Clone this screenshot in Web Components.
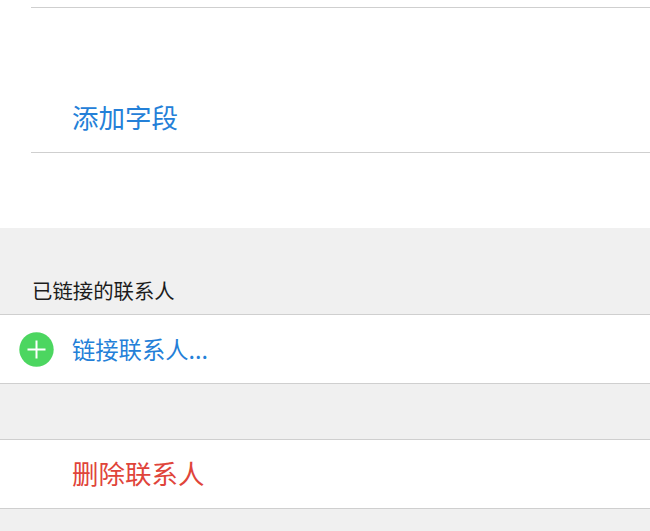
<!DOCTYPE html>
<html lang="zh">
<head>
<meta charset="utf-8">
<style>
  html, body { margin: 0; padding: 0; }
  body {
    width: 650px;
    height: 531px;
    overflow: hidden;
    background: #f0f0f0;
    font-family: "Noto Sans CJK SC", "Liberation Sans", sans-serif;
  }
</style>
</head>
<body>
<contact-page></contact-page>

<script>
// Plain row with a 72px text column, used for every tappable line
class ContactRow extends HTMLElement {
    constructor() {
        super();
        this.attachShadow({ mode: 'open' });
    }

    connectedCallback() {
        this.shadowRoot.innerHTML = `
            <style>
                :host {
                    display: flex;
                    align-items: center;
                    box-sizing: border-box;
                    height: 70px;
                    background: #fff;
                    border-top: 1px solid #cfcfcf;
                    border-bottom: 1px solid #cfcfcf;
                    color: #2480d8;
                    font-size: 23.3px;
                    font-weight: 400;
                }
                :host([danger]) {
                    color: #e0443a;
                    font-size: 26.5px;
                    padding-bottom: 4px;
                }
                .icon {
                    flex: 0 0 72px;
                    display: flex;
                    justify-content: flex-start;
                    padding-left: 19px;
                    box-sizing: border-box;
                }
            </style>
            <div class="icon"><slot name="icon"></slot></div>
            <slot></slot>
        `;
    }
}

class ContactPage extends HTMLElement {
    constructor() {
        super();
        this.attachShadow({ mode: 'open' });
    }

    connectedCallback() {
        this.shadowRoot.innerHTML = `
            <style>
                :host {
                    display: flex;
                    flex-direction: column;
                    height: 531px;
                    background: #f0f0f0;
                }
                .fields {
                    height: 228px;
                    background: #fff;
                    padding-top: 7px;
                    box-sizing: border-box;
                }
                .rule {
                    height: 1px;
                    margin-left: 31px;
                    background: #cfcfcf;
                }
                .add-field {
                    display: flex;
                    align-items: center;
                    height: 144px;
                    padding: 72px 0 0 72px;
                    box-sizing: border-box;
                    color: #2480d8;
                    font-size: 26.5px;
                    font-weight: 400;
                }
                .section-title {
                    height: 86px;
                    box-sizing: border-box;
                    padding: 48px 0 0 32px;
                    font-size: 20.4px;
                    line-height: 28px;
                    font-weight: 400;
                    color: #1c1c1c;
                }
                .spacer { height: 55px; flex: none; }
                svg { display: block; margin-top: 1px; }
            </style>
            <div class="fields">
                <div class="rule"></div>
                <div class="add-field">添加字段</div>
                <div class="rule"></div>
            </div>
            <div class="section-title">已链接的联系人</div>
            <contact-row>
                <svg slot="icon" width="35" height="35" viewBox="0 0 35 35">
                    <circle cx="17.5" cy="17.5" r="17.2" fill="#4cd660"/>
                    <path d="M8.5 17.5h18M17.5 8.5v18" stroke="#fff" stroke-width="2" fill="none"/>
                </svg>
                链接联系人...
            </contact-row>
            <div class="spacer"></div>
            <contact-row danger>删除联系人</contact-row>
        `;
    }
}

customElements.define('contact-row', ContactRow);
customElements.define('contact-page', ContactPage);
</script>
</body>
</html>
